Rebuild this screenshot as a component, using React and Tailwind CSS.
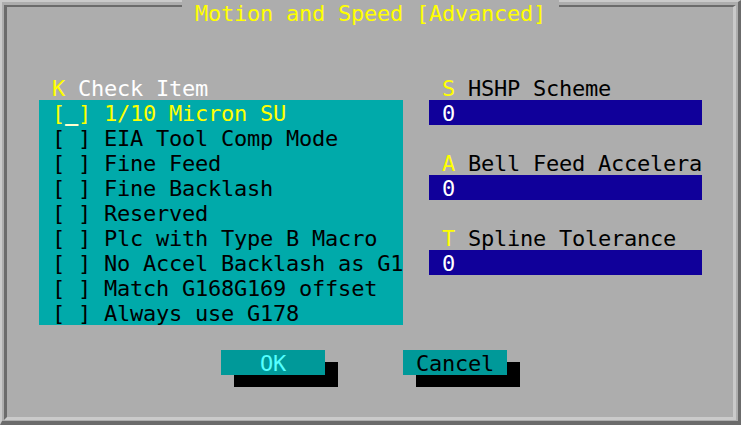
const items = [
  "EIA Tool Comp Mode",
  "Fine Feed",
  "Fine Backlash",
  "Reserved",
  "Plc with Type B Macro",
  "No Accel Backlash as G1",
  "Match G168G169 offset",
  "Always use G178",
];

const fields = [
  { key: "S", label: "HSHP Scheme" },
  { key: "A", label: "Bell Feed Accelera" },
  { key: "T", label: "Spline Tolerance" },
];

function Field({ k, label, last }) {
  return (
    <div className={last ? "" : "mb-[25px]"}>
      <div className="h-[25px] pl-[13px] whitespace-pre">
        <span className="text-[#ffff00]">{k}</span>
        <span className="text-black"> {label}</span>
      </div>
      <div className="h-[25px] pl-[13px] bg-[#10009a] text-white">0</div>
    </div>
  );
}

export default function App() {
  return (
    <div className="relative w-[741px] h-[425px] overflow-hidden bg-[#adadad] font-['DejaVu_Sans_Mono',monospace] text-[22px] leading-[27px] tracking-[-0.24px]">
      {/* etched window frame */}
      <div className="h-full border-t-2 border-l-2 border-r-[3px] border-b-[4px] border-t-[#cacaca] border-l-[#cacaca] border-r-[#6b6b6b] border-b-[#6b6b6b] pt-[3px] pl-[2px] pr-[2px] pb-[1px]">
        <div className="h-full border-t-2 border-l-[3px] border-r-[3px] border-b-[3px] border-t-[#6b6b6b] border-l-[#6b6b6b] border-r-[#cacaca] border-b-[#cacaca]">
          <div className="flex mt-[68px] ml-[32px]">
            {/* check list */}
            <div className="w-[364px]">
              <div className="h-[25px] pl-[13px] whitespace-pre">
                <span className="text-[#ffff00]">K</span>
                <span className="text-white"> Check Item</span>
              </div>
              <div className="bg-[#00aaaa]">
                <div className="h-[25px] pl-[13px] whitespace-pre text-[#ffff00]">
                  [<span className="text-[#ffffd0] font-bold">_</span>] 1/10 Micron SU
                </div>
                {items.map((t) => (
                  <div key={t} className="h-[25px] pl-[13px] whitespace-pre text-black">
                    [ ] {t}
                  </div>
                ))}
              </div>
            </div>

            {/* numeric fields */}
            <div className="w-[273px] ml-[26px]">
              {fields.map((f, i) => (
                <Field key={f.key} k={f.key} label={f.label} last={i === fields.length - 1} />
              ))}
            </div>
          </div>

          {/* buttons */}
          <div className="flex mt-[25px] ml-[214px]">
            <div className="w-[104px] h-[25px] bg-[#009999] text-[#55ffff] text-center shadow-[13px_12px_0_0_#000]">
              OK
            </div>
            <div className="w-[104px] h-[25px] ml-[78px] bg-[#009999] text-black text-center shadow-[13px_12px_0_0_#000]">
              Cancel
            </div>
          </div>
        </div>
      </div>

      {/* title sits over the frame lines */}
      <div className="absolute top-0 left-[182px] w-[377px] h-[25px] bg-[#adadad] text-center text-[#ffff00]">
        Motion and Speed [Advanced]
      </div>
    </div>
  );
}
